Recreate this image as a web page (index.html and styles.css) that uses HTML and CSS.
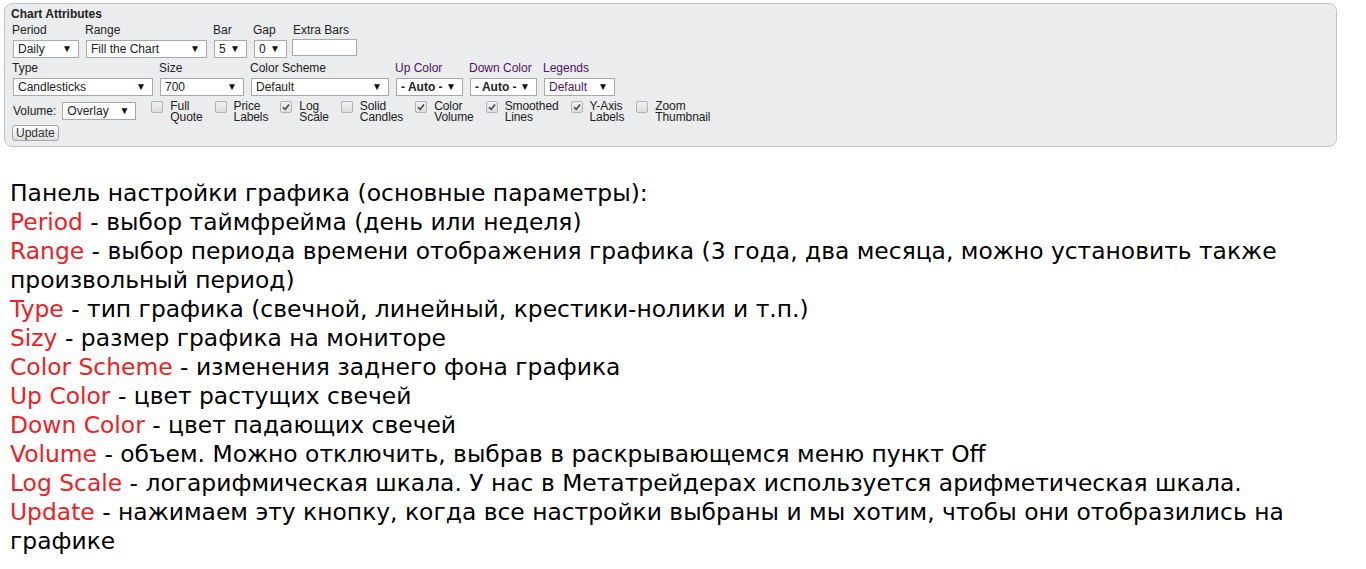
FILE: index.html
```html
<!DOCTYPE html>
<html lang="ru">
<head>
    <meta charset="UTF-8">
    <title>Chart Attributes</title>
    <link rel="stylesheet" href="styles.css">
</head>
<body>
    <div class="panel">
        <div class="panel-title">Chart Attributes</div>

        <div class="row">
            <div class="field">
                <label>Period</label>
                <span class="select w-period">Daily</span>
            </div>
            <div class="field">
                <label>Range</label>
                <span class="select w-range">Fill the Chart</span>
            </div>
            <div class="field">
                <label>Bar</label>
                <span class="select w-small">5</span>
            </div>
            <div class="field">
                <label>Gap</label>
                <span class="select w-small">0</span>
            </div>
            <div class="field">
                <label>Extra Bars</label>
                <input class="text-input" type="text">
            </div>
        </div>

        <div class="row">
            <div class="field">
                <label>Type</label>
                <span class="select w-type">Candlesticks</span>
            </div>
            <div class="field">
                <label>Size</label>
                <span class="select w-size">700</span>
            </div>
            <div class="field">
                <label>Color Scheme</label>
                <span class="select w-scheme">Default</span>
            </div>
            <div class="field">
                <label class="purple">Up Color</label>
                <span class="select w-color bold">- Auto -</span>
            </div>
            <div class="field">
                <label class="purple">Down Color</label>
                <span class="select w-color bold">- Auto -</span>
            </div>
            <div class="field">
                <label class="purple">Legends</label>
                <span class="select w-legends purple">Default</span>
            </div>
        </div>

        <div class="row options">
            <div class="volume">
                <span class="volume-label">Volume:</span>
                <span class="select w-volume">Overlay</span>
            </div>
            <div class="check"><span class="box"></span><span class="check-text">Full<br>Quote</span></div>
            <div class="check"><span class="box"></span><span class="check-text">Price<br>Labels</span></div>
            <div class="check"><span class="box checked"><svg viewBox="0 0 10 10"><path d="M2 5.2 L4.2 7.4 L8 2.4" /></svg></span><span class="check-text">Log<br>Scale</span></div>
            <div class="check"><span class="box"></span><span class="check-text">Solid<br>Candles</span></div>
            <div class="check"><span class="box checked"><svg viewBox="0 0 10 10"><path d="M2 5.2 L4.2 7.4 L8 2.4" /></svg></span><span class="check-text">Color<br>Volume</span></div>
            <div class="check"><span class="box checked"><svg viewBox="0 0 10 10"><path d="M2 5.2 L4.2 7.4 L8 2.4" /></svg></span><span class="check-text">Smoothed<br>Lines</span></div>
            <div class="check"><span class="box checked"><svg viewBox="0 0 10 10"><path d="M2 5.2 L4.2 7.4 L8 2.4" /></svg></span><span class="check-text">Y-Axis<br>Labels</span></div>
            <div class="check"><span class="box"></span><span class="check-text">Zoom<br>Thumbnail</span></div>
        </div>

        <button class="update-btn">Update</button>
    </div>

    <div class="notes">
        <p>Панель настройки графика (основные параметры):</p>
        <p><span class="key">Period</span> - выбор таймфрейма (день или неделя)</p>
        <p><span class="key">Range</span> - выбор периода времени отображения графика (3 года, два месяца, можно установить также произвольный период)</p>
        <p><span class="key">Type</span> - тип графика (свечной, линейный, крестики-нолики и т.п.)</p>
        <p><span class="key">Sizy</span> - размер графика на мониторе</p>
        <p><span class="key">Color Scheme</span> - изменения заднего фона графика</p>
        <p><span class="key">Up Color</span> - цвет растущих свечей</p>
        <p><span class="key">Down Color</span> - цвет падающих свечей</p>
        <p><span class="key">Volume</span> - объем. Можно отключить, выбрав в раскрывающемся меню пункт Off</p>
        <p><span class="key">Log Scale</span> - логарифмическая шкала. У нас в Метатрейдерах используется арифметическая шкала.</p>
        <p><span class="key">Update</span> - нажимаем эту кнопку, когда все настройки выбраны и мы хотим, чтобы они отобразились на графике</p>
    </div>
</body>
</html>
```

FILE: styles.css
```css
/* Basic reset */
body, html {
    margin: 0;
    padding: 0;
    background: #fff;
}

body {
    font-family: "Liberation Sans", Arial, sans-serif;
    color: #222;
}

/* Settings panel */
.panel {
    margin: 3px 29px 0 4px;
    padding: 2px 0 5px 8px;
    background-color: #ebecee;
    border: 1px solid #c4c4c4;
    border-radius: 8px;
    font-size: 12px;
}

.panel-title {
    font-weight: bold;
    line-height: 17px;
    margin-left: -2px;
}

.row {
    display: flex;
    gap: 7px;
    margin-bottom: 3px;
}

.field label {
    display: block;
    line-height: 14px;
    margin-left: -1px;
}

.purple {
    color: #4e1466;
}

.bold {
    font-weight: bold;
}

/* Fake select boxes */
.select {
    position: relative;
    display: block;
    box-sizing: border-box;
    height: 18px;
    margin-top: 3px;
    padding: 0 0 0 4px;
    line-height: 16px;
    background: #fff;
    border: 1px solid #a9a9a9;
    white-space: nowrap;
}

.select::after {
    content: "\25BC";
    position: absolute;
    right: 6px;
    top: 0;
    font-size: 10px;
    color: #111;
}

.w-period { width: 66px; }
.w-range { width: 121px; }
.w-small { width: 33px; }
.w-type { width: 140px; }
.w-size { width: 84px; }
.w-scheme { width: 138px; }
.w-color { width: 67px; }
.w-legends { width: 71px; }
.w-volume { width: 74px; }

.text-input {
    display: block;
    box-sizing: border-box;
    width: 65px;
    height: 17px;
    margin: 2px 0 0 -2px;
    border: 1px solid #a9a9a9;
    background: #fff;
    padding: 0;
}

/* Third row: volume + checkboxes */
.options {
    gap: 12px;
    align-items: flex-start;
    margin-bottom: 2px;
}

.volume {
    display: flex;
    align-items: center;
    gap: 6px;
    margin-top: 3px;
    margin-right: 3px;
}

.volume .select {
    margin-top: 0;
}

.check {
    display: flex;
    align-items: flex-start;
    gap: 7px;
}

.box {
    display: block;
    box-sizing: border-box;
    width: 12px;
    height: 12px;
    margin-top: 2px;
    border: 1px solid #b4b4b4;
    border-radius: 2px;
    background: linear-gradient(#f2f2f2, #dcdcdc);
}

.box svg {
    display: block;
    width: 10px;
    height: 10px;
}

.box path {
    fill: none;
    stroke: #444;
    stroke-width: 1.6;
}

.check-text {
    line-height: 11px;
    padding-top: 2px;
    letter-spacing: -0.1px;
}

.update-btn {
    display: block;
    height: 16px;
    padding: 0 3px;
    margin-left: -1px;
    font-family: inherit;
    font-size: 12px;
    line-height: 14px;
    color: #333;
    background: linear-gradient(#fdfdfd, #dedede);
    border: 1px solid #a6a6a6;
    border-radius: 3px;
}

/* Description text */
.notes {
    margin: 32px 0 0 10px;
    font-family: "DejaVu Sans", Verdana, sans-serif;
    font-size: 23.4px;
    line-height: 29px;
    color: #000;
}

.notes p {
    margin: 0;
}

.key {
    color: #ee2024;
}
```
